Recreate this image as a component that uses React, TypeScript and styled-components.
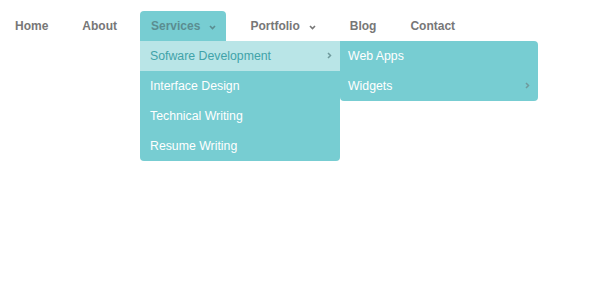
import React from 'react';
import styled, { createGlobalStyle } from 'styled-components';

const GlobalStyle = createGlobalStyle`
  html, body {
    margin: 0;
    padding: 0;
    background: #fff;
    font-family: "Liberation Sans", Arial, sans-serif;
  }
`;

const Chevron = ({ dir, color }: { dir: 'down' | 'right'; color: string }) =>
  dir === 'down' ? (
    <svg width="7" height="5" viewBox="0 0 7 5">
      <path d="M1 1 L3.5 3.5 L6 1" fill="none" stroke={color} strokeWidth="1.6" />
    </svg>
  ) : (
    <svg width="5" height="7" viewBox="0 0 5 7">
      <path d="M1 1 L3.5 3.5 L1 6" fill="none" stroke={color} strokeWidth="1.5" />
    </svg>
  );

interface SubItem {
  label: string;
  active?: boolean;
  children?: SubItem[];
}

interface NavItem {
  label: string;
  open?: boolean;
  caret?: boolean;
  children?: SubItem[];
}

const nav: NavItem[] = [
  { label: 'Home' },
  { label: 'About' },
  {
    label: 'Services',
    open: true,
    caret: true,
    children: [
      {
        label: 'Sofware Development',
        active: true,
        children: [
          { label: 'Web Apps' },
          { label: 'Widgets', children: [] },
        ],
      },
      { label: 'Interface Design' },
      { label: 'Technical Writing' },
      { label: 'Resume Writing' },
    ],
  },
  { label: 'Portfolio', caret: true },
  { label: 'Blog' },
  { label: 'Contact' },
];

export default function App() {
  return (
    <>
      <GlobalStyle />
      <Page>
        <Menu>
          {nav.map((item) => (
            <Tab key={item.label} $open={!!item.open}>
              <TabLabel $open={!!item.open}>{item.label}</TabLabel>
              {item.caret && (
                <Caret>
                  <Chevron dir="down" color={item.open ? '#5b8d91' : '#777'} />
                </Caret>
              )}
              {item.open && item.children && (
                <Dropdown>
                  {item.children.map((sub) => (
                    <DropItem key={sub.label} $active={!!sub.active} $indent={10}>
                      {sub.label}
                      {sub.children && (
                        <Arrow>
                          <Chevron dir="right" color="#6f9a9d" />
                        </Arrow>
                      )}
                      {sub.active && sub.children && (
                        <Flyout>
                          {sub.children.map((leaf) => (
                            <DropItem key={leaf.label} $active={false} $indent={8}>
                              {leaf.label}
                              {leaf.children && (
                                <Arrow>
                                  <Chevron dir="right" color="#6f9a9d" />
                                </Arrow>
                              )}
                            </DropItem>
                          ))}
                        </Flyout>
                      )}
                    </DropItem>
                  ))}
                </Dropdown>
              )}
            </Tab>
          ))}
        </Menu>
      </Page>
    </>
  );
}

const Page = styled.div`
  width: 600px;
  height: 290px;
  padding: 11px 0 0 4px;
  box-sizing: border-box;
`;

const Menu = styled.ul`
  display: flex;
  gap: 13px;
  list-style: none;
  margin: 0;
  padding: 0;
`;

const Tab = styled.li<{ $open: boolean }>`
  position: relative;
  display: flex;
  align-items: center;
  height: 30px;
  padding: 0 10px 0 11px;
  border-radius: 4px 4px 0 0;
  background: ${(p) => (p.$open ? '#77cdd2' : 'transparent')};
`;

const TabLabel = styled.span<{ $open: boolean }>`
  font-size: 12px;
  font-weight: bold;
  color: ${(p) => (p.$open ? '#5b8d91' : '#777')};
`;

const Caret = styled.span`
  display: flex;
  margin-left: 9px;
  margin-top: 3px;
`;

const Dropdown = styled.ul`
  position: absolute;
  top: 30px;
  left: 0;
  width: 200px;
  margin: 0;
  padding: 0;
  list-style: none;
  background: #77cdd2;
  border-radius: 0 0 4px 4px;
`;

const DropItem = styled.li<{ $active: boolean; $indent: number }>`
  position: relative;
  display: flex;
  align-items: center;
  height: 30px;
  padding: 0 10px 0 ${(p) => p.$indent}px;
  font-size: 12.3px;
  color: ${(p) => (p.$active ? '#41a3a9' : '#fff')};
  background: ${(p) => (p.$active ? '#b9e5e7' : 'transparent')};
`;

const Arrow = styled.span`
  display: flex;
  margin-left: auto;
  margin-right: -2px;
  margin-top: -1px;
`;

const Flyout = styled.ul`
  position: absolute;
  top: 0;
  left: 200px;
  width: 198px;
  margin: 0;
  padding: 0;
  list-style: none;
  background: #77cdd2;
  border-radius: 0 4px 4px 4px;
`;
